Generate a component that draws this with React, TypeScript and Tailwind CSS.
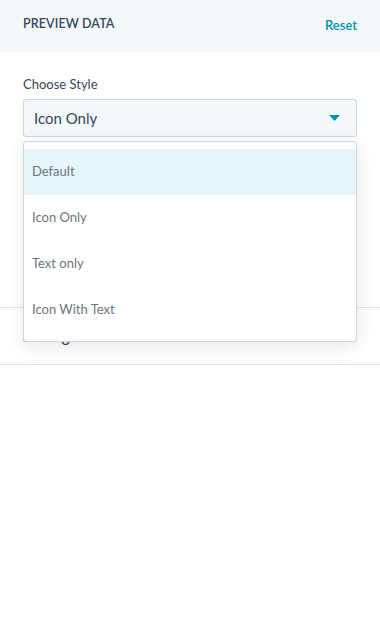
import { useState } from "react";

// Preview data panel with an open "Choose Style" dropdown

const OPTIONS = ["Default", "Icon Only", "Text only", "Icon With Text"];

export default function App() {
  const [value] = useState("Icon Only");
  const [active] = useState("Default");

  return (
    <div className="w-[380px] h-[639px] bg-white overflow-hidden" style={{ fontFamily: "Lato, 'Open Sans', sans-serif" }}>
      {/* Header */}
      <div className="h-[52px] bg-[#f5f8fa] flex items-start justify-between px-[23px]">
        <span className="pt-[15px] text-[12.5px] font-semibold text-[#33475b] tracking-[0.1px]">PREVIEW DATA</span>
        <button className="pt-[16px] text-[13px] font-semibold text-[#0091ae]">Reset</button>
      </div>

      {/* Form */}
      <div className="px-[23px] pt-[23px]">
        <label className="block text-[13px] text-[#33475b] leading-[18px]">Choose Style</label>
        <div className="relative mt-[6px]">
          <div className="h-[38px] bg-[#f5f8fa] border border-[#cbd6e2] rounded-[3px] flex items-center justify-between pl-[10px] pr-[16px]">
            <span className="text-[15px] text-[#33475b]">{value}</span>
            <svg width="11" height="6" viewBox="0 0 11 6">
              <path d="M0 0 L11 0 L5.5 6 Z" fill="#0091ae" />
            </svg>
          </div>

          {/* Open menu */}
          <div className="absolute left-0 right-0 top-[42px] z-10 bg-white border border-[#cbd6e2] rounded-[3px] shadow-[0_4px_18px_rgba(0,0,0,0.1)] pt-[7px] pb-[8px]">
            {OPTIONS.map((opt) => (
              <div
                key={opt}
                className={`h-[46px] flex items-center px-[8px] text-[13px] text-[#6b7580] ${opt === active ? "bg-[#e5f5f8]" : ""}`}
              >
                {opt}
              </div>
            ))}
          </div>
        </div>
      </div>

      {/* Fields hidden under the menu */}
      <div className="h-[170px]" />

      {/* Settings section */}
      <div className="border-t border-b border-[#dfe3eb] h-[58px] flex items-center px-[23px]">
        <span className="text-[15px] font-semibold text-[#33475b]">Settings</span>
      </div>
    </div>
  );
}
